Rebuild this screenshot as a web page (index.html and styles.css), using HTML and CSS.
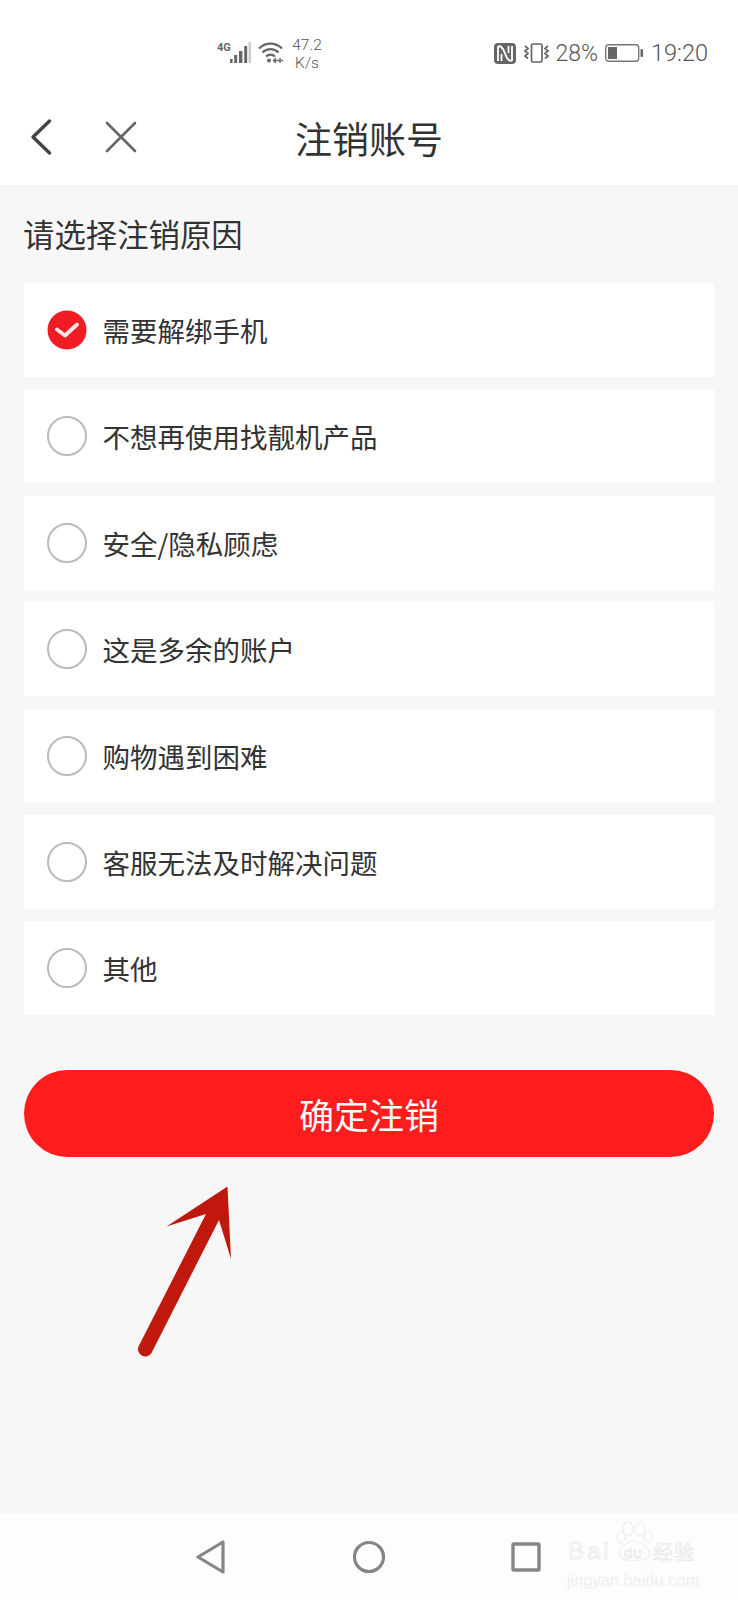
FILE: index.html
```html
<!DOCTYPE html>
<html lang="zh-CN">
<head>
<meta charset="utf-8">
<title>注销账号</title>
<link rel="stylesheet" href="styles.css">
</head>
<body>
<div class="page">
  <header class="top">
    <div class="status">
      <div class="status-left">
        <span class="net">4G</span>
        <svg class="sig" width="22" height="22" viewBox="0 0 22 22"><rect x="0" y="17" width="2.600" height="4" fill="#666"/><rect x="4.200" y="13" width="3" height="8" fill="#666"/><rect x="9" y="9" width="3.400" height="12" fill="#666"/><rect x="14.200" y="4" width="3" height="17" fill="#666"/><rect x="18.500" y="0" width="2.600" height="21" fill="#ccc"/></svg>
        <svg class="wifi" width="25" height="22" viewBox="0 0 25 22" fill="none" stroke="#666" stroke-width="2.300"><path d="M1 6.500 C7.500 0 17.500 0 24 6.500"/><path d="M4.500 10.500 C9 6 16 6 20.500 10.500"/><path d="M8 14.500 C10.500 12 14.500 12 17 14.500"/><circle cx="11" cy="18.500" r="2" fill="#666" stroke="none"/><path d="M15 18.500 h10 M18 16 l-2.500 2.500 2.500 2.500 M22 16 v5" stroke-width="1.300"/></svg>
        <span class="speed">47.2<br>K/s</span>
      </div>
      <div class="status-right">
        <svg width="22" height="21" viewBox="0 0 22 21"><rect x="0" y="0" width="22" height="21" rx="4" fill="#666"/><path d="M4 3 V18 M4.500 3 Q7 3 9 6 L13 15 Q15 18 17.500 18 M18 3 V18 M7.500 11 V18 M14.500 3 V10" fill="none" stroke="#fff" stroke-width="1.800"/></svg>
        <svg class="vib" width="27" height="20" viewBox="0 0 27 20" fill="none" stroke="#666" stroke-width="1.700"><rect x="8.500" y="1" width="10.500" height="18" rx="1.500"/><path d="M2 3 l3 2.500 -3 2.500 3 2.500 -3 2.500 3 2.500 M25 3 l-3 2.500 3 2.500 -3 2.500 3 2.500 -3 2.500"/></svg>
        <span class="pct">28%</span>
        <svg class="batt" width="38" height="18" viewBox="0 0 38 18"><rect x="0.700" y="0.700" width="33" height="16.600" rx="3" fill="none" stroke="#777" stroke-width="1.400"/><rect x="3" y="3" width="9" height="12" fill="#666"/><rect x="35.500" y="5" width="2.500" height="8" rx="1" fill="#666"/></svg>
        <span class="time">19:20</span>
      </div>
    </div>
    <div class="bar">
      <svg class="back" width="24" height="38" viewBox="0 0 24 38" fill="none" stroke="#444" stroke-width="3.400" stroke-linecap="round" stroke-linejoin="round"><path d="M19.500 3 L3 19 L19.500 35"/></svg>
      <svg class="close" width="32" height="32" viewBox="0 0 32 32" fill="none" stroke="#666" stroke-width="2.600" stroke-linecap="round"><path d="M2 2 L30 30 M30 2 L2 30"/></svg>
      <h1 class="title">注销账号</h1>
    </div>
  </header>
  <main class="content">
    <h2 class="prompt">请选择注销原因</h2>
    <ul class="reasons">
      <li class="reason">
        <svg class="check" width="40" height="40" viewBox="0 0 40 40"><circle cx="20" cy="20" r="19.500" fill="#f01c24"/><path d="M10 19.500 L18 25.500 L30 14.500" fill="none" stroke="#fbe9e9" stroke-width="3.800" stroke-linecap="round" stroke-linejoin="round"/></svg>
        <span>需要解绑手机</span>
      </li>
      <li class="reason"><i class="radio"></i><span>不想再使用找靓机产品</span></li>
      <li class="reason"><i class="radio"></i><span>安全/隐私顾虑</span></li>
      <li class="reason"><i class="radio"></i><span>这是多余的账户</span></li>
      <li class="reason"><i class="radio"></i><span>购物遇到困难</span></li>
      <li class="reason"><i class="radio"></i><span>客服无法及时解决问题</span></li>
      <li class="reason"><i class="radio"></i><span>其他</span></li>
    </ul>
    <button class="confirm">确定注销</button>
  </main>
  <svg class="arrow" width="738" height="1600" viewBox="0 0 738 1600"><path d="M227.500 1186.500 L231 1259 L219 1220 L151.500 1353 A7.300 7.300 0 0 1 138.500 1346.500 L206 1214 L166.500 1226.500 Z" fill="#c1180d"/></svg>
  <nav class="nav">
    <svg width="30" height="34" viewBox="0 0 30 34" fill="none" stroke="#858585" stroke-width="3.200" stroke-linejoin="round"><path d="M27 2 V32 L2 17 Z"/></svg>
    <svg width="34" height="34" viewBox="0 0 34 34" fill="none" stroke="#858585" stroke-width="3.200"><circle cx="17" cy="17" r="14.500"/></svg>
    <svg width="30" height="30" viewBox="0 0 30 30" fill="none" stroke="#858585" stroke-width="3.400" stroke-linejoin="round"><rect x="2" y="2" width="26" height="26" rx="1"/></svg>
  </nav>
  <div class="mark">
    <svg class="paw" width="131" height="50" viewBox="0 0 131 50" fill="none" stroke="#eeeeee" stroke-width="1.200"><ellipse cx="54" cy="17" rx="4" ry="6"/><ellipse cx="61" cy="9" rx="5" ry="7"/><ellipse cx="73" cy="9" rx="5" ry="7"/><ellipse cx="81" cy="17" rx="4" ry="6"/><path d="M53 36 C49 28 60 22 67 21 C75 22 85 28 82 36 C80 42 54 42 53 36 Z"/></svg>
    <span class="bai">Bai</span>
    <span class="du">du</span>
    <span class="jy">经验</span>
    <span class="mark-url">jingyan.baidu.com</span>
  </div>
</div>
</body>
</html>
```
FILE: styles.css
```css
* { box-sizing: border-box; }
html, body { margin: 0; padding: 0; }
body {
  font-family: "Noto Sans CJK SC", "Noto Sans", sans-serif;
  color: #333;
  background: #f7f7f7;
}
.page {
  position: relative;
  width: 738px;
  height: 1600px;
  display: flex;
  flex-direction: column;
  overflow: hidden;
}
.top {
  background: #fff;
  border-bottom: 1px solid #ebebeb;
  height: 187px;
}
.status {
  height: 96px;
  padding: 34px 30px 0 217px;
  display: flex;
  justify-content: space-between;
  align-items: flex-start;
  font-family: Roboto, sans-serif;
  font-weight: 300;
  color: #555;
}
.status-left, .status-right { display: flex; align-items: center; }
.status-left { height: 40px; }
.status-right { height: 38px; }
.net { font-size: 11px; font-weight: 700; margin: -13px 0 0; width: 13px; color: #666; }
.sig { margin-top: -3px; }
.wifi { margin: -3px 0 0 6px; }
.speed { font-size: 15.500px; line-height: 18px; text-align: center; margin-left: 8px; width: 32px; }
.vib { margin-left: 7px; }
.pct { font-size: 23px; margin-left: 5px; }
.batt { margin-left: 7px; }
.time { font-size: 23.500px; margin-left: 8px; }
.bar {
  position: relative;
  height: 90px;
  display: flex;
  align-items: center;
  padding-left: 29.500px;
}
.back { margin-top: -8px; }
.close { margin-left: 51.500px; margin-top: -8px; }
.title {
  position: absolute;
  left: 0;
  right: 0;
  top: 17px;
  margin: 0;
  text-align: center;
  font-size: 37px;
  line-height: 50px;
  font-weight: 400;
  color: #333;
}
.content { flex: 1; padding: 0 24px; }
.prompt {
  margin: 0 0 0 -1px;
  height: 96px;
  padding-top: 25px;
  font-size: 31.400px;
  line-height: 44px;
  font-weight: 400;
  color: #333;
}
.reasons {
  list-style: none;
  margin: 0;
  padding: 0;
  display: flex;
  flex-direction: column;
  gap: 12.400px;
}
.reason {
  height: 94px;
  background: #fff;
  display: flex;
  align-items: center;
  gap: 15.500px;
  padding: 0 0 0 23px;
  font-size: 27.500px;
  color: #333;
}
.check, .radio { flex: none; }
.radio {
  display: block;
  width: 40px;
  height: 40px;
  border: 2px solid #bbb;
  border-radius: 50%;
}
.confirm {
  display: block;
  width: 100%;
  height: 87px;
  margin-top: 55px;
  border: 0;
  border-radius: 44px;
  background: #ff1c1c;
  color: #fff;
  font-family: inherit;
  font-size: 35px;
}
.arrow { position: absolute; left: 0; top: 0; pointer-events: none; }
.nav {
  height: 86px;
  background: #fdfdfd;
  display: flex;
  align-items: center;
  padding-left: 196px;
}
.nav svg:nth-child(2) { margin-left: 126px; }
.nav svg:nth-child(3) { margin-left: 124.500px; }
.mark {
  position: absolute;
  left: 567px;
  top: 1520px;
  width: 131px;
  height: 66px;
  font-family: "Liberation Sans", sans-serif;
  white-space: nowrap;
}
.paw { position: absolute; left: 0; top: 0; }
.bai, .du, .jy {
  position: absolute;
  color: #fbfbfb;
  -webkit-text-stroke: 0.600px #e6e6e6;
}
.bai { left: 1px; top: 18px; font-size: 24px; line-height: 26px; letter-spacing: 3px; }
.du { left: 57px; top: 24px; font-size: 15px; line-height: 18px; letter-spacing: 1px; }
.jy { left: 86px; top: 19px; font-family: "Noto Sans CJK SC", sans-serif; font-size: 20px; line-height: 26px; letter-spacing: 1px; }
.mark-url { position: absolute; left: 0; top: 50px; font-size: 16.400px; line-height: 20px; color: #efefef; }
```
